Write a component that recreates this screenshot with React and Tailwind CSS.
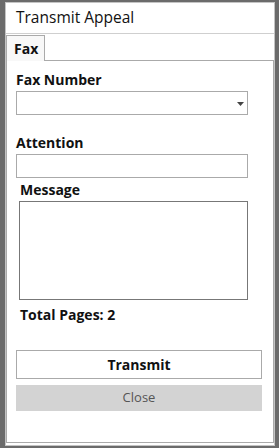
export default function App() {
  const font = { fontFamily: '"Open Sans", "Noto Sans", sans-serif' }
  return (
    <div className="h-[448px] w-[279px] overflow-hidden bg-[#6b6b6b] pl-[5px] pt-[2px]" style={font}>
      <div className="flex h-[444px] w-[270px] flex-col border border-[#c4c4c4] bg-white">
        <div className="flex h-[31px] shrink-0 items-center border-b border-[#cfcfcf] pl-[10px] text-[15.5px] text-[#111]">
          Transmit Appeal
        </div>
        <div className="flex flex-1 flex-col pt-[1px]">
          <div className="flex">
            <div className="relative z-10 -mb-px flex h-[26px] w-[39px] items-center border border-b-0 border-[#aaaaaa] bg-[#f8f8f8] pl-[7px] text-[14px] font-bold text-[#111]">
              Fax
            </div>
          </div>
          <div className="mb-[2px] flex flex-1 flex-col border border-[#aaaaaa] px-[9px] pt-[9px]">
            <label className="text-[14px] font-bold leading-[20px] text-[#111]">Fax Number</label>
            <div className="relative mt-[1px] h-[24px] w-[232px] border border-[#aaaaaa] bg-white">
              <svg className="absolute right-[3px] top-[10px]" width="7" height="4" viewBox="0 0 7 4">
                <path d="M0 0h7L3.5 4z" fill="#444" />
              </svg>
            </div>
            <label className="mt-[18px] text-[14px] font-bold leading-[20px] text-[#111]">Attention</label>
            <input className="mt-[1px] h-[24px] w-[232px] border border-[#aaaaaa] bg-white outline-none" />
            <label className="ml-[4px] mt-[2px] text-[14px] font-bold leading-[20px] text-[#111]">Message</label>
            <textarea className="ml-[3px] mt-[1px] h-[99px] w-[229px] resize-none border border-[#777777] bg-white outline-none" />
            <div className="ml-[4px] mt-[5px] text-[14px] font-bold leading-[20px] text-[#111]">Total Pages: 2</div>
            <button className="mt-[25px] h-[29px] w-[246px] border border-[#aaaaaa] bg-white text-[14px] font-bold text-[#111]">
              Transmit
            </button>
            <button className="mt-[6px] h-[26px] w-[246px] bg-[#d3d3d3] text-[13px] text-[#555]">
              Close
            </button>
          </div>
        </div>
      </div>
    </div>
  )
}
